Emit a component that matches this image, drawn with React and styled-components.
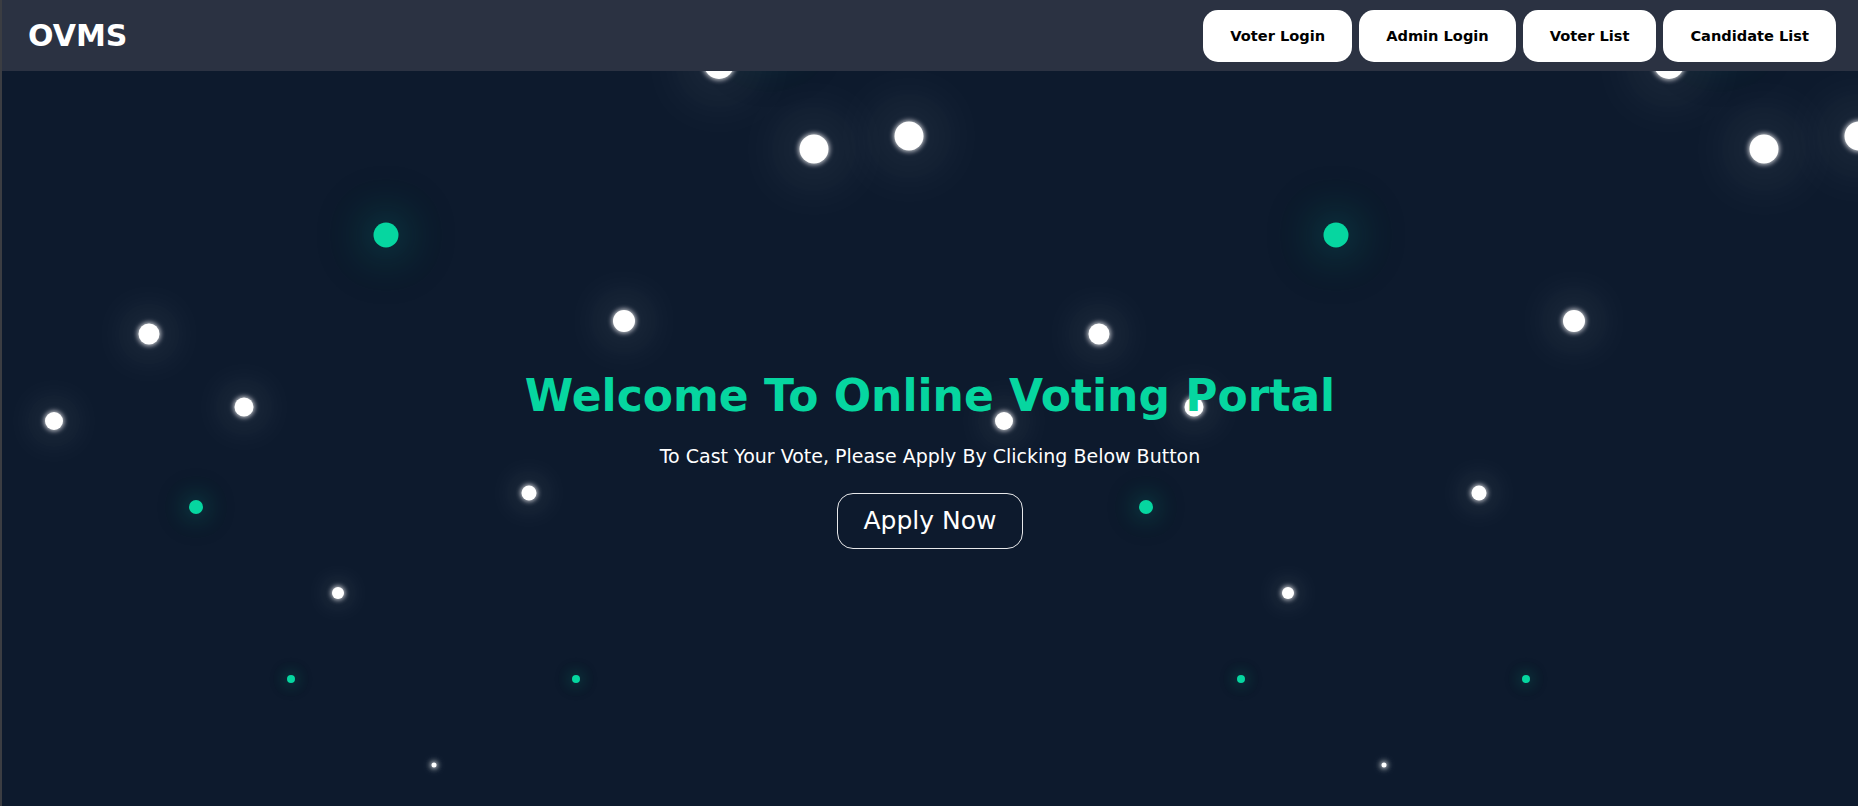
import styled, { createGlobalStyle } from "styled-components";

const GlobalStyle = createGlobalStyle`
* { box-sizing: border-box; }
body {
  margin: 0;
  font-family: "DejaVu Sans", Verdana, sans-serif;
  background: #0d1a2d;
}
`;

const Page = styled.div`
display: flex;
flex-direction: column;
height: 100vh;
border-left: 2px solid #3b3d42;
overflow: hidden;
`;

const NavBar = styled.header`
position: relative;
z-index: 2;
height: 71px;
flex-shrink: 0;
display: flex;
align-items: center;
justify-content: space-between;
padding: 0 22px 0 26px;
background: #2b3242;
`;

const Logo = styled.div`
color: #fff;
font-size: 30px;
font-weight: 700;
`;

const NavLinks = styled.nav`
display: flex;
gap: 7px;
`;

const NavButton = styled.button`
height: 52px;
padding: 0 27px;
border: none;
border-radius: 15px;
background: #fff;
color: #000;
font-family: inherit;
font-size: 14.6px;
font-weight: 700;
cursor: pointer;
`;

const Hero = styled.main`
position: relative;
flex: 1;
display: flex;
flex-direction: column;
align-items: center;
justify-content: center;
padding-top: 41px;
background: #0d1a2d;
`;

const Sky = styled.div`
position: absolute;
inset: 0;
overflow: hidden;
pointer-events: none;
`;

const Dot = styled.span`
position: absolute;
left: ${p => p.$x}px;
top: ${p => p.$y}px;
width: ${p => p.$size}px;
height: ${p => p.$size}px;
border-radius: 50%;
transform: translate(-50%, -50%);
background: ${p => (p.$teal ? "#06d6a0" : "#fff")};
box-shadow: ${p =>
  p.$teal
    ? `0 0 ${p.$size * 1.6}px ${p.$size * 0.3}px rgba(6,214,160,0.22), 0 0 ${p.$size * 5}px ${p.$size * 0.6}px rgba(6,214,160,0.07)`
    : `0 0 5px 1px rgba(255,255,255,0.8), 0 0 ${p.$size * 2.2}px ${p.$size * 0.5}px rgba(255,255,255,0.13), 0 0 ${p.$size * 5}px ${p.$size}px rgba(255,255,255,0.05)`};
`;

const Content = styled.div`
position: relative;
z-index: 1;
display: flex;
flex-direction: column;
align-items: center;
`;

const Title = styled.h1`
margin: 0;
color: #06d6a0;
font-size: 44px;
font-weight: 700;
`;

const Subtitle = styled.p`
margin: 24px 0 26px;
color: #fff;
font-size: 19px;
`;

const ApplyButton = styled.button`
height: 56px;
padding: 0 26px;
border: 1px solid rgba(255, 255, 255, 0.9);
border-radius: 16px;
background: transparent;
color: #fff;
font-family: inherit;
font-size: 25px;
cursor: pointer;
`;

// one tile of the starfield, repeated every 950px; y is from the top of the page
const tile = [
  { x: 770, y: 30, size: 28, teal: true },
  { x: 719, y: 64, size: 30 },
  { x: 814, y: 149, size: 29 },
  { x: 909, y: 136, size: 29 },
  { x: 386, y: 235, size: 25, teal: true },
  { x: 149, y: 334, size: 21 },
  { x: 624, y: 321, size: 22 },
  { x: 244, y: 407, size: 19 },
  { x: 54, y: 421, size: 18 },
  { x: 529, y: 493, size: 15 },
  { x: 196, y: 507, size: 14, teal: true },
  { x: 338, y: 593, size: 12 },
  { x: 291, y: 679, size: 8, teal: true },
  { x: 576, y: 679, size: 8, teal: true },
  { x: 434, y: 765, size: 5 },
];

const stars = [0, 950].flatMap(dx => tile.map(s => ({ ...s, x: s.x + dx - 2, y: s.y - 71 })));

const links = ["Voter Login", "Admin Login", "Voter List", "Candidate List"];

export default function App() {
  return (
    <Page>
      <GlobalStyle />
      <NavBar>
        <Logo>OVMS</Logo>
        <NavLinks>
          {links.map(l => (
            <NavButton key={l}>{l}</NavButton>
          ))}
        </NavLinks>
      </NavBar>
      <Hero>
        <Sky>
          {stars.map((s, i) => (
            <Dot key={i} $x={s.x} $y={s.y} $size={s.size} $teal={s.teal} />
          ))}
        </Sky>
        <Content>
          <Title>Welcome To Online Voting Portal</Title>
          <Subtitle>To Cast Your Vote, Please Apply By Clicking Below Button</Subtitle>
          <ApplyButton>Apply Now</ApplyButton>
        </Content>
      </Hero>
    </Page>
  );
}
